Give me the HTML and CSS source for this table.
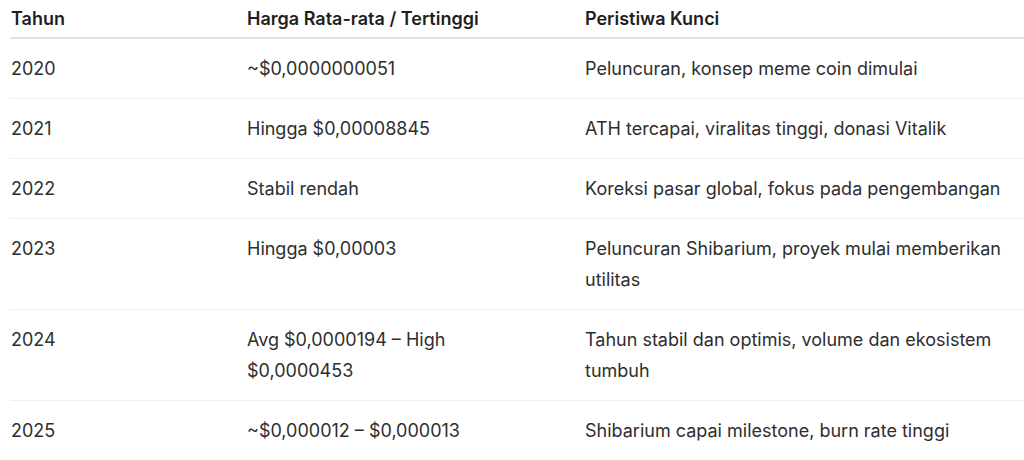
FILE: index.html
```html
<!DOCTYPE html>
<html lang="id">
<head>
<meta charset="utf-8">
<link rel="stylesheet" href="styles.css">
</head>
<body>
<div class="table">
  <div class="row head">
    <div class="cell">Tahun</div>
    <div class="cell">Harga Rata-rata / Tertinggi</div>
    <div class="cell">Peristiwa Kunci</div>
  </div>
  <div class="row">
    <div class="cell">2020</div>
    <div class="cell">~$0,0000000051</div>
    <div class="cell">Peluncuran, konsep meme coin dimulai</div>
  </div>
  <div class="row">
    <div class="cell">2021</div>
    <div class="cell">Hingga $0,00008845</div>
    <div class="cell">ATH tercapai, viralitas tinggi, donasi Vitalik</div>
  </div>
  <div class="row">
    <div class="cell">2022</div>
    <div class="cell">Stabil rendah</div>
    <div class="cell">Koreksi pasar global, fokus pada pengembangan</div>
  </div>
  <div class="row">
    <div class="cell">2023</div>
    <div class="cell">Hingga $0,00003</div>
    <div class="cell">Peluncuran Shibarium, proyek mulai memberikan utilitas</div>
  </div>
  <div class="row">
    <div class="cell">2024</div>
    <div class="cell">Avg $0,0000194 – High $0,0000453</div>
    <div class="cell">Tahun stabil dan optimis, volume dan ekosistem tumbuh</div>
  </div>
  <div class="row last">
    <div class="cell">2025</div>
    <div class="cell">~$0,000012 – $0,000013</div>
    <div class="cell">Shibarium capai milestone, burn rate tinggi</div>
  </div>
</div>
</body>
</html>
```

FILE: styles.css
```css
html, body {
  margin: 0;
  padding: 0;
  background: #ffffff;
}
body {
  font-family: Inter, "Noto Sans", sans-serif;
  font-size: 18px;
  color: #2e2e2e;
  overflow: hidden;
}
.table {
  margin-left: 10px;
  display: flex;
  flex-direction: column;
}
.row {
  display: grid;
  grid-template-columns: 236px 338px 1fr;
  border-bottom: 1px solid #efefef;
  padding: 14px 0 14px 1px;
  line-height: 31px;
}
.row.head {
  padding: 3px 0 3px 1px;
  border-bottom: 2px solid #e3e3e3;
  font-weight: 600;
  color: #1f1f1f;
}
.row.last {
  border-bottom: none;
}
.cell {
  padding-right: 24px;
}
.cell:nth-child(2) {
  padding-right: 60px;
}
.cell:nth-child(3) {
  padding-right: 4px;
}
```
